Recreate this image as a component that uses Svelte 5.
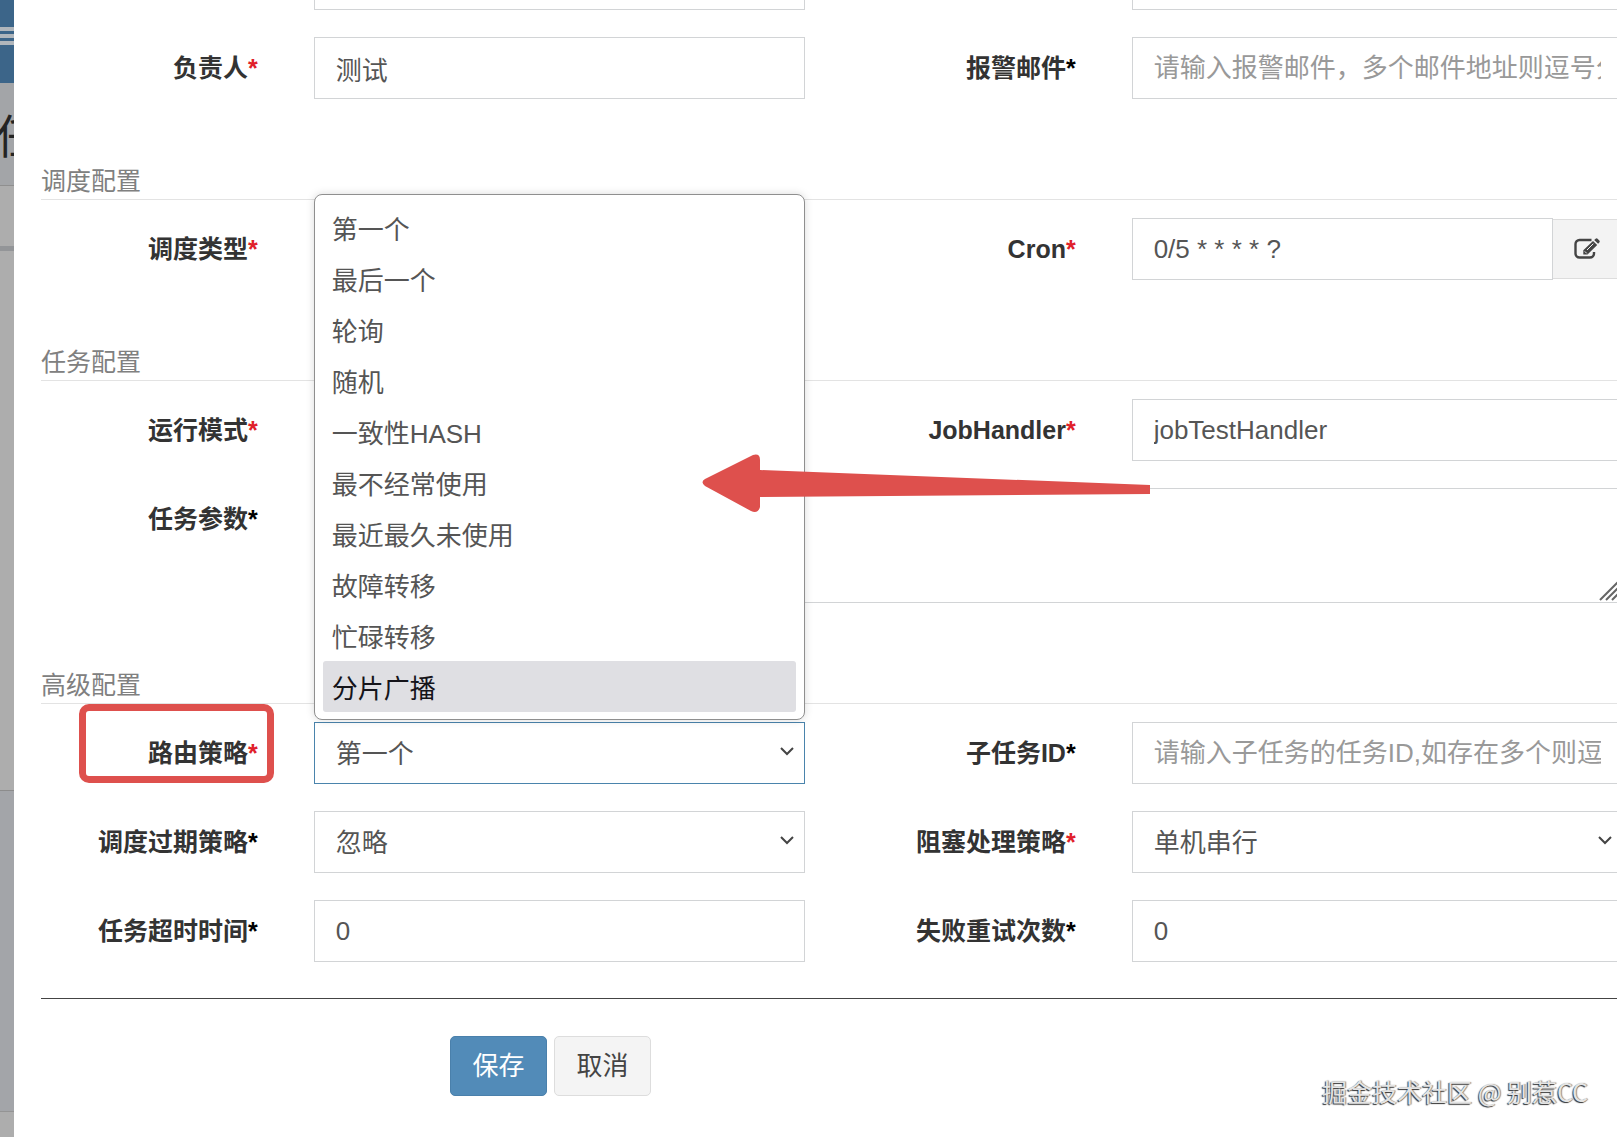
<script>
  const strategies = [
    '第一个',
    '最后一个',
    '轮询',
    '随机',
    '一致性HASH',
    '最不经常使用',
    '最近最久未使用',
    '故障转移',
    '忙碌转移',
    '分片广播'
  ];

  let listOpen = $state(true);
  let highlighted = $state('分片广播');
  let form = $state({
    desc: '',
    author: '测试',
    email: '',
    scheduleType: 'CRON',
    cron: '0/5 * * * * ?',
    mode: 'BEAN',
    handler: 'jobTestHandler',
    params: '',
    route: '第一个',
    childId: '',
    misfire: '忽略',
    block: '单机串行',
    timeout: '0',
    retry: '0'
  });

  function pick(name) {
    form.route = name;
    listOpen = false;
  }
</script>

{#snippet label(id, text, required)}
  <label for={id}>{text}<span class="star" class:required>*</span></label>
{/snippet}

{#snippet select(id, key, options)}
  <div class="field">
    <select {id} class="control" bind:value={form[key]}>
      {#each options as option}
        <option>{option}</option>
      {/each}
    </select>
    <svg class="chevron" viewBox="0 0 14 10"><path d="M1 1l6 6 6-6" /></svg>
  </div>
{/snippet}

{#snippet input(id, key, placeholder)}
  <div class="field">
    <input {id} class="control" type="text" bind:value={form[key]} {placeholder} />
  </div>
{/snippet}

<main>
  <div class="behind" aria-hidden="true">
    <div class="navbar">
      <i></i><i></i><i></i>
    </div>
    <div class="title">任</div>
    <div class="filters"></div>
    <div class="box"></div>
    <div class="gap"></div>
    <div class="footer"></div>
  </div>

  <form class="modal" onsubmit={(e) => e.preventDefault()}>
    <div class="row first">
      <div></div>
      <div class="field"><input class="control" aria-label="执行器" /></div>
      <div></div>
      <div class="field"><input class="control" aria-label="任务描述" bind:value={form.desc} /></div>
    </div>
    <div class="row">
      {@render label('author', '负责人', true)}
      {@render input('author', 'author', '')}
      {@render label('email', '报警邮件', false)}
      {@render input('email', 'email', '请输入报警邮件，多个邮件地址则逗号分隔')}
    </div>

    <h2>调度配置</h2>
    <div class="row">
      {@render label('scheduleType', '调度类型', true)}
      {@render select('scheduleType', 'scheduleType', ['CRON'])}
      {@render label('cron', 'Cron', true)}
      <div class="field group">
        <input id="cron" class="control" type="text" bind:value={form.cron} />
        <button type="button" class="addon" aria-label="编辑 Cron">
          <svg viewBox="0 0 26 21">
            <path class="line" d="M17.500 2H5.500A4 4 0 0 0 1.500 6V15.500A4 4 0 0 0 5.500 19.500H16A4 4 0 0 0 20 15.500V14" />
            <path d="M19 3l4.200 4-9.700 9.400H9.300v-4.200zM20.200 2l1.400-1.300q1-.8 2 0l1.700 1.700q.9 1 0 2l-1.200 1.300z" />
            <path class="cut" d="M10.800 13.400l2 2M13 12l6.300-6.300" />
          </svg>
        </button>
      </div>
    </div>

    <h2>任务配置</h2>
    <div class="row">
      {@render label('mode', '运行模式', true)}
      {@render select('mode', 'mode', ['BEAN'])}
      {@render label('handler', 'JobHandler', true)}
      {@render input('handler', 'handler', '')}
    </div>
    <div class="row">
      {@render label('params', '任务参数', false)}
      <div class="field wide">
        <textarea id="params" class="control" bind:value={form.params}></textarea>
        <svg class="grip" viewBox="0 0 22 22"><path d="M1 21L21 1M7 21L21 7M13 21l8-8" /></svg>
      </div>
    </div>

    <h2>高级配置</h2>
    <div class="row">
      <div class="marked">
        {@render label('route', '路由策略', true)}
        <span class="mark"></span>
      </div>
      <div class="field active">
        {@render select('route', 'route', strategies)}
        {#if listOpen}
          <ul class="list" role="listbox" aria-label="路由策略">
            {#each strategies as name}
              <!-- svelte-ignore a11y_click_events_have_key_events -->
              <li
                role="option"
                tabindex="-1"
                aria-selected={name === highlighted}
                class:highlighted={name === highlighted}
                onmouseenter={() => (highlighted = name)}
                onclick={() => pick(name)}
              >{name}</li>
            {/each}
          </ul>
        {/if}
      </div>
      {@render label('childId', '子任务ID', false)}
      {@render input('childId', 'childId', '请输入子任务的任务ID,如存在多个则逗号分隔')}
    </div>
    <div class="row">
      {@render label('misfire', '调度过期策略', false)}
      {@render select('misfire', 'misfire', ['忽略', '立即执行一次'])}
      {@render label('block', '阻塞处理策略', true)}
      {@render select('block', 'block', ['单机串行', '丢弃后续调度', '覆盖之前调度'])}
    </div>
    <div class="row">
      {@render label('timeout', '任务超时时间', false)}
      {@render input('timeout', 'timeout', '')}
      {@render label('retry', '失败重试次数', false)}
      {@render input('retry', 'retry', '')}
    </div>

    <hr />
    <div class="actions">
      <button type="submit" class="btn primary">保存</button>
      <button type="button" class="btn">取消</button>
    </div>
  </form>

  <svg class="arrow" viewBox="0 0 450 60" aria-hidden="true">
    <path d="M3 25L51 1Q58-1 58 6V16L448 31V40L58 43V53Q56 60 49 57L3 32Q-2 28 3 25z" />
  </svg>
  <div class="watermark">掘金技术社区 @ 别惹CC</div>
</main>

<style>
  :global(body) {
    margin: 0;
    background: #fff;
  }

  main {
    position: relative;
    min-height: 100vh;
    overflow: hidden;
    font: 26px/36px 'Liberation Sans', 'Noto Sans CJK SC', sans-serif;
    color: #333;
  }

  main * {
    box-sizing: border-box;
  }

  /* dimmed page that shows beside the modal */
  .behind {
    position: absolute;
    inset: 0;
    display: flex;
    flex-direction: column;
    background: #adadad;
  }

  .navbar {
    height: 83px;
    padding-top: 27px;
    background: #3c6589;
    display: flex;
    flex-direction: column;
    gap: 3px;
  }

  .navbar i {
    width: 20px;
    height: 4px;
    background: #b0b6bc;
  }

  .title {
    height: 103px;
    margin-left: -5px;
    border-bottom: 1px solid #8f8f8f;
    background: #a3a5a8;
    font-size: 46px;
    line-height: 109px;
    color: #242424;
  }

  .filters {
    height: 60px;
  }

  .box {
    height: 545px;
    border-top: 5px solid #939598;
    border-bottom: 1px solid #8c8c8c;
  }

  .gap {
    height: 321px;
    background: #a3a5a9;
    border-bottom: 1px solid #949494;
  }

  .footer {
    flex: 1;
  }

  .modal {
    position: relative;
    margin: 0 -33px 0 14px;
    background: #fff;
    min-height: 100vh;
  }

  /* label and control columns of the 12 column grid, twice */
  .row {
    display: grid;
    grid-template-columns: 2fr 4fr 2fr 4fr;
    padding-bottom: 27px;
  }

  .row > :global(*) {
    min-width: 0;
  }

  /* only the lower edge of this row is scrolled into view */
  .first {
    grid-template-rows: 10px;
    align-items: end;
  }

  label {
    display: block;
    padding: 13px 29px 0 0;
    text-align: right;
    font-size: 25px;
    font-weight: bold;
    white-space: nowrap;
  }

  .star {
    color: #000;
  }

  .star.required {
    color: #e0202a;
  }

  .field {
    position: relative;
    padding: 0 27px;
  }

  .field .field {
    padding: 0;
  }

  .wide {
    grid-column: span 3;
  }

  .control {
    display: block;
    width: 100%;
    height: 62px;
    margin: 0;
    padding: 0 21px;
    border: 1px solid #d2d4d6;
    border-radius: 0;
    outline: 0;
    background: #fff;
    font: inherit;
    color: #555;
    appearance: none;
  }

  .control::placeholder {
    color: #999;
    opacity: 1;
  }

  select.control {
    padding-top: 2px;
  }

  textarea.control {
    height: 115px;
    resize: none;
  }

  .active .control {
    border-color: #4a84ac;
  }

  .chevron {
    position: absolute;
    top: 25px;
    right: 38px;
    width: 14px;
    height: 10px;
    fill: none;
    stroke: #444;
    stroke-width: 2;
  }

  .active .chevron {
    right: 11px;
  }

  .grip {
    position: absolute;
    right: 29px;
    bottom: 2px;
    width: 22px;
    height: 22px;
    stroke: #666;
    stroke-width: 2;
  }

  .group {
    display: flex;
    align-items: center;
  }

  .addon {
    flex: none;
    width: 70px;
    height: 60px;
    padding: 0 0 2px 21px;
    border: 1px solid #ddd;
    border-left: 0;
    background: #f3f3f3;
    text-align: left;
  }

  .addon svg {
    display: block;
    width: 26px;
    height: 21px;
    fill: #444;
  }

  .addon .line {
    fill: none;
    stroke: #444;
    stroke-width: 2.4;
  }

  .addon .cut {
    fill: none;
    stroke: #f3f3f3;
    stroke-width: 1;
  }

  h2 {
    margin: 37px 27px 18px;
    border-bottom: 1px solid #e3e3e3;
    font-size: 25px;
    font-weight: normal;
    color: #808080;
  }

  .list {
    position: absolute;
    z-index: 2;
    left: 27px;
    right: 27px;
    bottom: 64px;
    margin: 0;
    padding: 7px 8px;
    border: 1px solid #8f8f8f;
    border-radius: 8px;
    background: #fff;
    box-shadow: 0 0 8px rgba(0, 0, 0, 0.15);
    list-style: none;
    color: #555;
  }

  .list li {
    padding: 5px 9px 0;
    border-radius: 3px;
    line-height: 46px;
  }

  .list .highlighted {
    background: #dfdfe3;
    color: #15141a;
  }

  .marked {
    position: relative;
  }

  .mark {
    position: absolute;
    inset: -18px 13px 1px 65px;
    border: 7px solid #de504d;
    border-radius: 10px;
  }

  hr {
    margin: 9px 27px 37px;
    border: 0;
    border-top: 1px solid #444;
  }

  .actions {
    display: flex;
    gap: 7px;
    padding-left: calc(25% + 27px);
  }

  .btn {
    width: 97px;
    height: 60px;
    padding: 0;
    border: 1px solid #ddd;
    border-radius: 5px;
    background: #f4f4f4;
    font: inherit;
    color: #444;
  }

  .btn.primary {
    border-color: #4a80ab;
    background: #528bb8;
    color: #fff;
  }

  .arrow {
    position: absolute;
    z-index: 3;
    left: 702px;
    top: 454px;
    width: 450px;
    height: 60px;
    fill: #de504d;
  }

  .watermark {
    position: absolute;
    right: 29px;
    bottom: 28px;
    font-family: 'Noto Sans CJK SC', sans-serif;
    font-size: 25px;
    color: #e4e4e4;
    text-shadow: -1px 1px 1px #333, 1px 0 1px #888;
  }
</style>
